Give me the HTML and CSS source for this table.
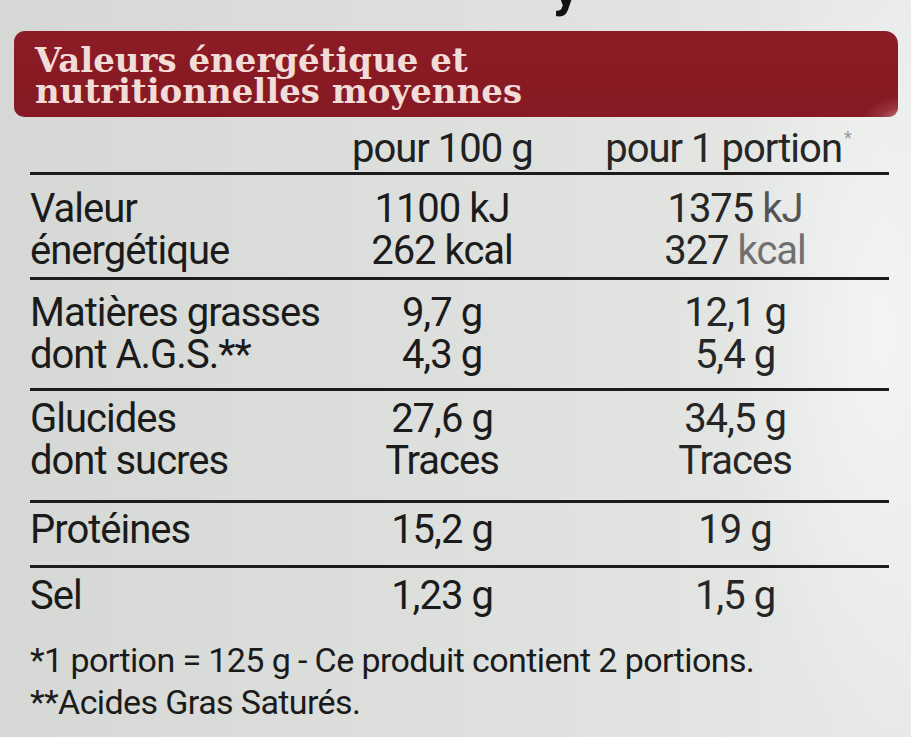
FILE: index.html
```html
<!DOCTYPE html>
<html lang="fr">
<head>
<meta charset="utf-8">
<title>Valeurs nutritionnelles</title>
<link rel="stylesheet" href="styles.css">
</head>
<body>
<div class="label">
  <div class="top-strip"><span class="top-glyph">y</span></div>
  <div class="band">
    <h1 class="band-title">Valeurs énergétique et<br>nutritionnelles moyennes</h1>
  </div>
  <div class="table">
    <div class="row head">
      <div class="cell lab"></div>
      <div class="cell v1">pour 100 g</div>
      <div class="cell v2">pour 1 portion<span class="ast">*</span></div>
    </div>
    <div class="row sec r1">
      <div class="cell lab">Valeur<br>énergétique</div>
      <div class="cell v1">1100 kJ<br>262 kcal</div>
      <div class="cell v2">1375 <span class="fade">kJ</span><br>327 <span class="fade2">kcal</span></div>
    </div>
    <div class="row sec r2">
      <div class="cell lab">Matières grasses<br>dont A.G.S.**</div>
      <div class="cell v1">9,7 g<br>4,3 g</div>
      <div class="cell v2">12,1 g<br>5,4 g</div>
    </div>
    <div class="row sec r3">
      <div class="cell lab">Glucides<br>dont sucres</div>
      <div class="cell v1">27,6 g<br>Traces</div>
      <div class="cell v2">34,5 g<br>Traces</div>
    </div>
    <div class="row sec r4">
      <div class="cell lab">Protéines</div>
      <div class="cell v1">15,2 g</div>
      <div class="cell v2">19 g</div>
    </div>
    <div class="row sec r5">
      <div class="cell lab">Sel</div>
      <div class="cell v1">1,23 g</div>
      <div class="cell v2">1,5 g</div>
    </div>
  </div>
  <div class="notes">
    <p class="note">*1 portion = 125 g - Ce produit contient 2 portions.</p>
    <p class="note">**Acides Gras Saturés.</p>
  </div>
</div>
</body>
</html>
```
FILE: styles.css
```css
html, body {
  margin: 0;
  padding: 0;
}
body {
  width: 911px;
  height: 737px;
  overflow: hidden;
  background:
    radial-gradient(ellipse 150px 420px at 880px 330px, rgba(248,250,249,0.7), rgba(248,250,249,0) 100%),
    linear-gradient(90deg, #d5d8d4 0%, #dcdfdb 45%, #e1e4e1 75%, #e8eae9 100%);
  font-family: Roboto, "Liberation Sans", sans-serif;
  color: #1b1b1b;
}
.label {
  display: flex;
  flex-direction: column;
}
.top-strip {
  height: 31px;
  overflow: hidden;
  padding-left: 553px;
}
.top-glyph {
  display: block;
  font: 700 52px/1 Roboto, sans-serif;
  color: #111;
  margin-top: -38px;
}
.band {
  margin-left: 14px;
  width: 884px;
  height: 86px;
  box-sizing: border-box;
  border-radius: 11px 13px 9px 10px;
  background:
    radial-gradient(ellipse 45px 28px at 892px 92px, rgba(232,190,190,0.85), rgba(190,110,115,0.3) 60%, rgba(137,27,36,0) 100%),
    linear-gradient(180deg, #8c1c26 0%, #861923 100%);
  padding: 14px 0 0 21px;
}
.band-title {
  margin: 0;
  font-family: "DejaVu Serif", serif;
  font-weight: 700;
  font-size: 34px;
  line-height: 31px;
  color: #f1dcd8;
  white-space: nowrap;
}
.table {
  margin-left: 30px;
  width: 859px;
  margin-top: 11px;
}
.row {
  display: grid;
  grid-template-columns: 322px 180px 73px 260px;
  font-size: 40px;
  line-height: 42px;
  letter-spacing: -1px;
  white-space: nowrap;
}
.cell.v1 {
  grid-column: 2;
  text-align: center;
}
.cell.v2 {
  grid-column: 4;
  text-align: center;
  color: #262626;
}
.head {
  padding-bottom: 2px;
  color: #202020;
}
.head .v2 {
  padding-right: 14px;
}
.ast {
  font-size: 18px;
  vertical-align: top;
  line-height: 20px;
  color: #9a9a9a;
  margin-left: 2px;
}
.sec {
  border-top: 3px solid #1c1c1c;
}
.r1 { padding: 13px 0 5px; }
.r2 { padding: 12px 0 12px; }
.r3 { padding: 7px 0 18px; }
.r4 { padding: 6px 0 14px; }
.r5 { padding: 7px 0 0; }
.fade { color: #555; }
.fade2 { color: #707070; }
.notes {
  margin-left: 30px;
  margin-top: 22px;
}
.note {
  margin: 0;
  font-size: 34px;
  line-height: 42px;
  letter-spacing: -0.6px;
  white-space: nowrap;
}
```
